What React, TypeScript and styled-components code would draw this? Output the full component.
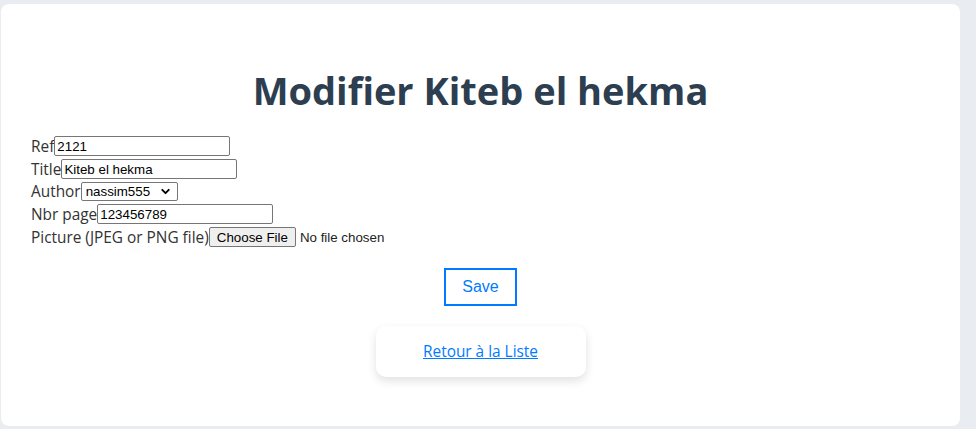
import React from "react"
import styled, { createGlobalStyle } from "styled-components"
import { ChevronDown } from "lucide-react"

const GlobalStyle = createGlobalStyle`
  html, body {
    margin: 0;
    padding: 0;
    background: #e9ecf1;
  }
  body {
    font-family: "Open Sans", "Noto Sans", sans-serif;
    color: #212529;
  }
`

const Page = styled.div`
  padding: 4px 16px 3px 1px;
`

const Card = styled.div`
  background: #fff;
  border-radius: 8px;
  height: 422px;
  box-sizing: border-box;
  padding: 54px 30px 0 30px;
  display: flex;
  flex-direction: column;
`

const Heading = styled.h1`
  margin: 0 0 13px;
  text-align: center;
  font-family: "Open Sans", "Noto Sans", sans-serif;
  font-weight: 700;
  font-size: 38px;
  line-height: 64px;
  color: #2c3e50;
`

const Form = styled.form`
  display: flex;
  flex-direction: column;
`

const Row = styled.div`
  display: flex;
  align-items: center;
  height: 22.7px;
  font-size: 15.4px;
  color: #333;
`

const Label = styled.label`
  white-space: nowrap;
`

const TextInput = styled.input`
  box-sizing: border-box;
  width: 176px;
  height: 20px;
  margin: 0;
  padding: 1px 2px;
  border: 1px solid #767676;
  border-radius: 2px;
  font-family: "Liberation Sans", Arial, sans-serif;
  font-size: 13.33px;
  color: #000;
  outline: none;
`

const SelectWrap = styled.span`
  position: relative;
  display: inline-flex;
  align-items: center;
`

const Select = styled.select`
  appearance: none;
  box-sizing: border-box;
  width: 97px;
  height: 19px;
  margin: 0;
  padding: 0 20px 0 4px;
  border: 1px solid #767676;
  border-radius: 2px;
  background: #fff;
  font-family: "Liberation Sans", Arial, sans-serif;
  font-size: 13.33px;
  color: #000;
`

const Chevron = styled(ChevronDown)`
  position: absolute;
  right: 6px;
  pointer-events: none;
`

const FileInput = styled.input`
  margin: 0;
  font-family: "Liberation Sans", Arial, sans-serif;
  font-size: 13.33px;
  color: #222;
  &::file-selector-button {
    height: 20px;
    margin: 0 4px 0 0;
    padding: 1px 7px;
    border: 1px solid #767676;
    border-radius: 2px;
    background: #efefef;
    font-family: "Liberation Sans", Arial, sans-serif;
    font-size: 13.33px;
    color: #000;
  }
`

const SaveButton = styled.button`
  align-self: center;
  margin-top: 20px;
  width: 73px;
  height: 38px;
  box-sizing: border-box;
  border: 2px solid #007bff;
  background: #fff;
  color: #007bff;
  font-family: "Liberation Sans", Arial, sans-serif;
  font-size: 16px;
`

const BackCard = styled.div`
  align-self: center;
  margin-top: 20px;
  width: 210px;
  height: 51px;
  border-radius: 10px;
  background: #fff;
  box-shadow: 0 4px 10px rgba(0, 0, 0, 0.12);
  display: flex;
  align-items: center;
  justify-content: center;
`

const BackLink = styled.a`
  color: #007bff;
  font-size: 15.4px;
  text-decoration: underline;
`

export default function App() {
  return (
    <>
      <GlobalStyle />
      <Page>
        <Card>
          <Heading>Modifier Kiteb el hekma</Heading>
          <Form onSubmit={(e) => e.preventDefault()}>
            <Row>
              <Label htmlFor="ref">Ref</Label>
              <TextInput id="ref" defaultValue="2121" />
            </Row>
            <Row>
              <Label htmlFor="title">Title</Label>
              <TextInput id="title" defaultValue="Kiteb el hekma" />
            </Row>
            <Row>
              <Label htmlFor="author">Author</Label>
              <SelectWrap>
                <Select id="author" defaultValue="nassim555">
                  <option value="nassim555">nassim555</option>
                </Select>
                <Chevron size={13} strokeWidth={3.5} color="#000" />
              </SelectWrap>
            </Row>
            <Row>
              <Label htmlFor="pages">Nbr page</Label>
              <TextInput id="pages" defaultValue="123456789" />
            </Row>
            <Row>
              <Label htmlFor="pic">Picture (JPEG or PNG file)</Label>
              <FileInput id="pic" type="file" accept="image/png, image/jpeg" />
            </Row>
            <SaveButton type="submit">Save</SaveButton>
          </Form>
          <BackCard>
            <BackLink href="#">Retour à la Liste</BackLink>
          </BackCard>
        </Card>
      </Page>
    </>
  )
}
